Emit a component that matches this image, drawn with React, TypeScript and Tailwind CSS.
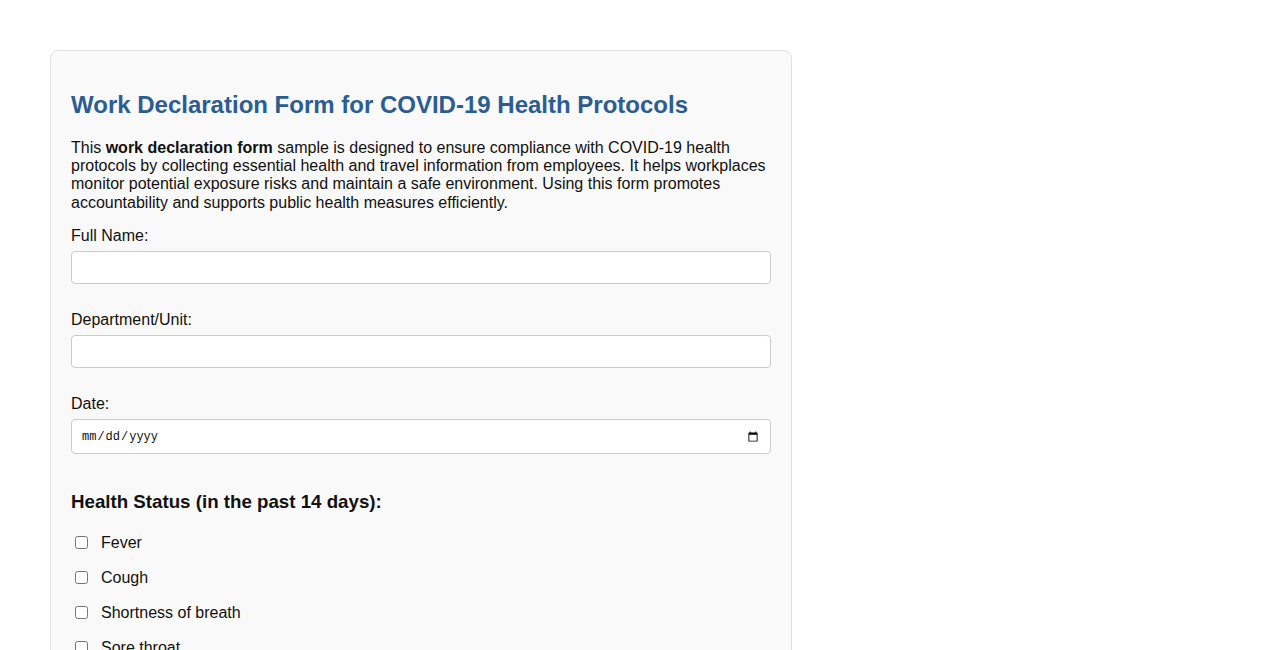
import React from "react";

const font = { fontFamily: '"Liberation Sans", Arial, sans-serif' };

function Field({ label, type = "text" }: { label: string; type?: string }) {
  return (
    <div className="mb-[27px]">
      <label className="block text-[16px] leading-[18px] text-[#111] mb-[6px]">{label}</label>
      {type === "date" ? (
        <input
          type="date"
          className="block w-full h-[35px] bg-white border border-[#ccc] rounded-[4px] px-[9px] text-[12px] text-[#111] font-['Liberation_Mono',monospace]"
        />
      ) : (
        <input
          type={type}
          className="block w-full h-[33px] bg-white border border-[#ccc] rounded-[4px] px-[8px] text-[16px]"
        />
      )}
    </div>
  );
}

function Check({ label }: { label: string }) {
  return (
    <label className="flex items-center h-[20px] mb-[15px] text-[16px] text-[#111]">
      <input type="checkbox" className="w-[13px] h-[13px] ml-[4px] mr-[13px] my-0" />
      <span>{label}</span>
    </label>
  );
}

export default function App() {
  return (
    <div className="min-h-screen bg-white pt-[50px] pl-[50px]" style={font}>
      <div className="w-[742px] bg-[#f9f9f9] border border-[#e0e0e0] rounded-[8px] px-[20px] pt-[40px] pb-[20px]">
        <h1 className="text-[24px] leading-[27.6px] font-bold text-[#2b5c94] mb-[20px]">
          Work Declaration Form for COVID-19 Health Protocols
        </h1>
        <p className="text-[16px] leading-[18.4px] text-[#111] mb-[15px]">
          This <strong className="font-bold">work declaration form</strong> sample is designed to ensure compliance with COVID-19 health
          protocols by collecting essential health and travel information from employees. It helps workplaces
          monitor potential exposure risks and maintain a safe environment. Using this form promotes
          accountability and supports public health measures efficiently.
        </p>
        <Field label="Full Name:" />
        <Field label="Department/Unit:" />
        <Field label="Date:" type="date" />
        <h3 className="text-[18.72px] leading-[21.5px] font-bold text-[#111] mt-[37px] mb-[20px]">
          Health Status (in the past 14 days):
        </h3>
        <Check label="Fever" />
        <Check label="Cough" />
        <Check label="Shortness of breath" />
        <Check label="Sore throat" />
        <Check label="Loss of taste or smell" />
      </div>
    </div>
  );
}
